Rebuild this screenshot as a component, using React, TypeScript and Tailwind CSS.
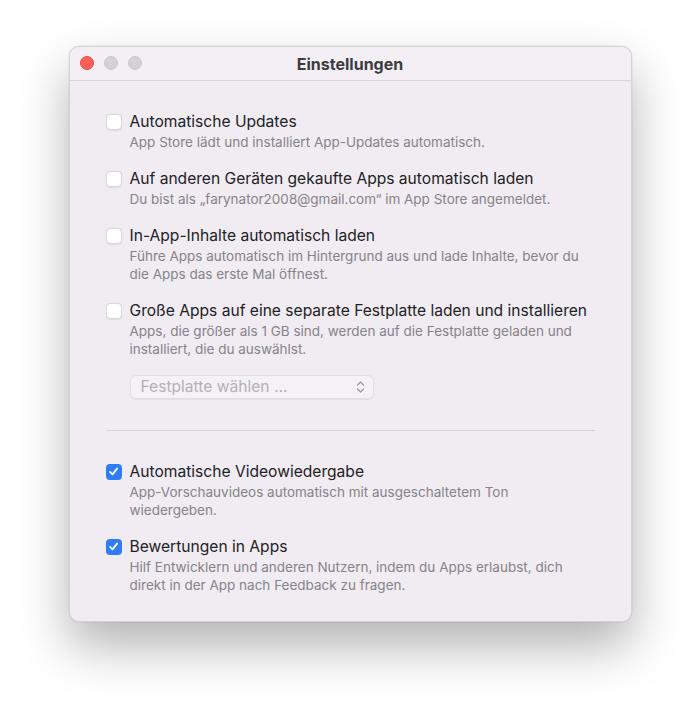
import { Fragment } from "react";

type Item = {
  label: string;
  desc: string[];
  checked: boolean;
};

const top: Item[] = [
  {
    label: "Automatische Updates",
    desc: ["App Store lädt und installiert App-Updates automatisch."],
    checked: false,
  },
  {
    label: "Auf anderen Geräten gekaufte Apps automatisch laden",
    desc: ["Du bist als „farynator2008@gmail.com“ im App Store angemeldet."],
    checked: false,
  },
  {
    label: "In-App-Inhalte automatisch laden",
    desc: [
      "Führe Apps automatisch im Hintergrund aus und lade Inhalte, bevor du",
      "die Apps das erste Mal öffnest.",
    ],
    checked: false,
  },
  {
    label: "Große Apps auf eine separate Festplatte laden und installieren",
    desc: [
      "Apps, die größer als 1 GB sind, werden auf die Festplatte geladen und",
      "installiert, die du auswählst.",
    ],
    checked: false,
  },
];

const bottom: Item[] = [
  {
    label: "Automatische Videowiedergabe",
    desc: [
      "App-Vorschauvideos automatisch mit ausgeschaltetem Ton",
      "wiedergeben.",
    ],
    checked: true,
  },
  {
    label: "Bewertungen in Apps",
    desc: [
      "Hilf Entwicklern und anderen Nutzern, indem du Apps erlaubst, dich",
      "direkt in der App nach Feedback zu fragen.",
    ],
    checked: true,
  },
];

const Checkbox = ({ checked }: { checked: boolean }) =>
  checked ? (
    <span className="flex h-4 w-4 shrink-0 items-center justify-center rounded-[4px] bg-[#2f7df6]">
      <svg width="11" height="11" viewBox="0 0 12 12" fill="none">
        <path
          d="M2.2 6.4 L4.9 9.1 L9.9 2.8"
          stroke="white"
          strokeWidth="2"
          strokeLinecap="round"
          strokeLinejoin="round"
        />
      </svg>
    </span>
  ) : (
    <span className="block h-4 w-4 shrink-0 rounded-[4px] border border-[#d9d6dc] bg-white shadow-[0_0.5px_1px_rgba(0,0,0,0.08)]" />
  );

const Row = ({ item }: { item: Item }) => (
  <div className="flex gap-2">
    <div className="flex h-[21px] items-center">
      <Checkbox checked={item.checked} />
    </div>
    <div>
      <div className="text-[15.6px] leading-[21px] text-[#232225]">{item.label}</div>
      <div className="mt-px text-[13.5px] leading-[18px] text-[#86838a]">
        {item.desc.map((line, i) => (
          <Fragment key={i}>
            {i > 0 && <br />}
            {line}
          </Fragment>
        ))}
      </div>
    </div>
  </div>
);

export default function App() {
  return (
    <div
      className="flex min-h-[713px] justify-center bg-white pt-[46px]"
      style={{ fontFamily: "Inter, 'Noto Sans', sans-serif" }}
    >
      <div className="h-[576px] w-[563px] overflow-hidden rounded-[10px] border border-[#d6d2d9] bg-[#f0ecf2] shadow-[0_24px_50px_rgba(0,0,0,0.3),0_0_0_0.5px_rgba(0,0,0,0.08)]">
        <div className="relative flex h-[34px] items-center justify-center border-b border-[#d9d5dc] bg-[#f3eff5]">
          <div className="absolute left-[10px] top-[9px] flex gap-[10px]">
            <span className="h-[14px] w-[14px] rounded-full bg-[#fe5f57] border border-[#e5483f]" />
            <span className="h-[14px] w-[14px] rounded-full bg-[#d4d1d6] border border-[#c7c4ca]" />
            <span className="h-[14px] w-[14px] rounded-full bg-[#d4d1d6] border border-[#c7c4ca]" />
          </div>
          <span className="text-[16px] font-bold text-[#3d3c40]">Einstellungen</span>
        </div>

        <div className="px-[36px] pt-[30px]">
          <div className="flex flex-col gap-[17px]">
            {top.map((item) => (
              <Row key={item.label} item={item} />
            ))}
          </div>

          <div className="mt-[17px] pl-[24px]">
            <div className="flex h-6 w-[244px] items-center justify-between rounded-[6px] border border-[#e3e0e5] bg-[#f5f2f7] pl-[10px] pr-[8px] shadow-[0_0.5px_1px_rgba(0,0,0,0.06)]">
              <span className="text-[15.6px] text-[#b3b0b6]">Festplatte wählen …</span>
              <svg width="9" height="14" viewBox="0 0 9 14" fill="none">
                <path
                  d="M1.5 5 L4.5 2 L7.5 5 M1.5 9 L4.5 12 L7.5 9"
                  stroke="#9e9ba2"
                  strokeWidth="1.4"
                  strokeLinecap="round"
                  strokeLinejoin="round"
                />
              </svg>
            </div>
          </div>

          <div className="mt-[31px] h-px bg-[#d6d2d9]" />

          <div className="mt-[30px] flex flex-col gap-[17px]">
            {bottom.map((item) => (
              <Row key={item.label} item={item} />
            ))}
          </div>
        </div>
      </div>
    </div>
  );
}
